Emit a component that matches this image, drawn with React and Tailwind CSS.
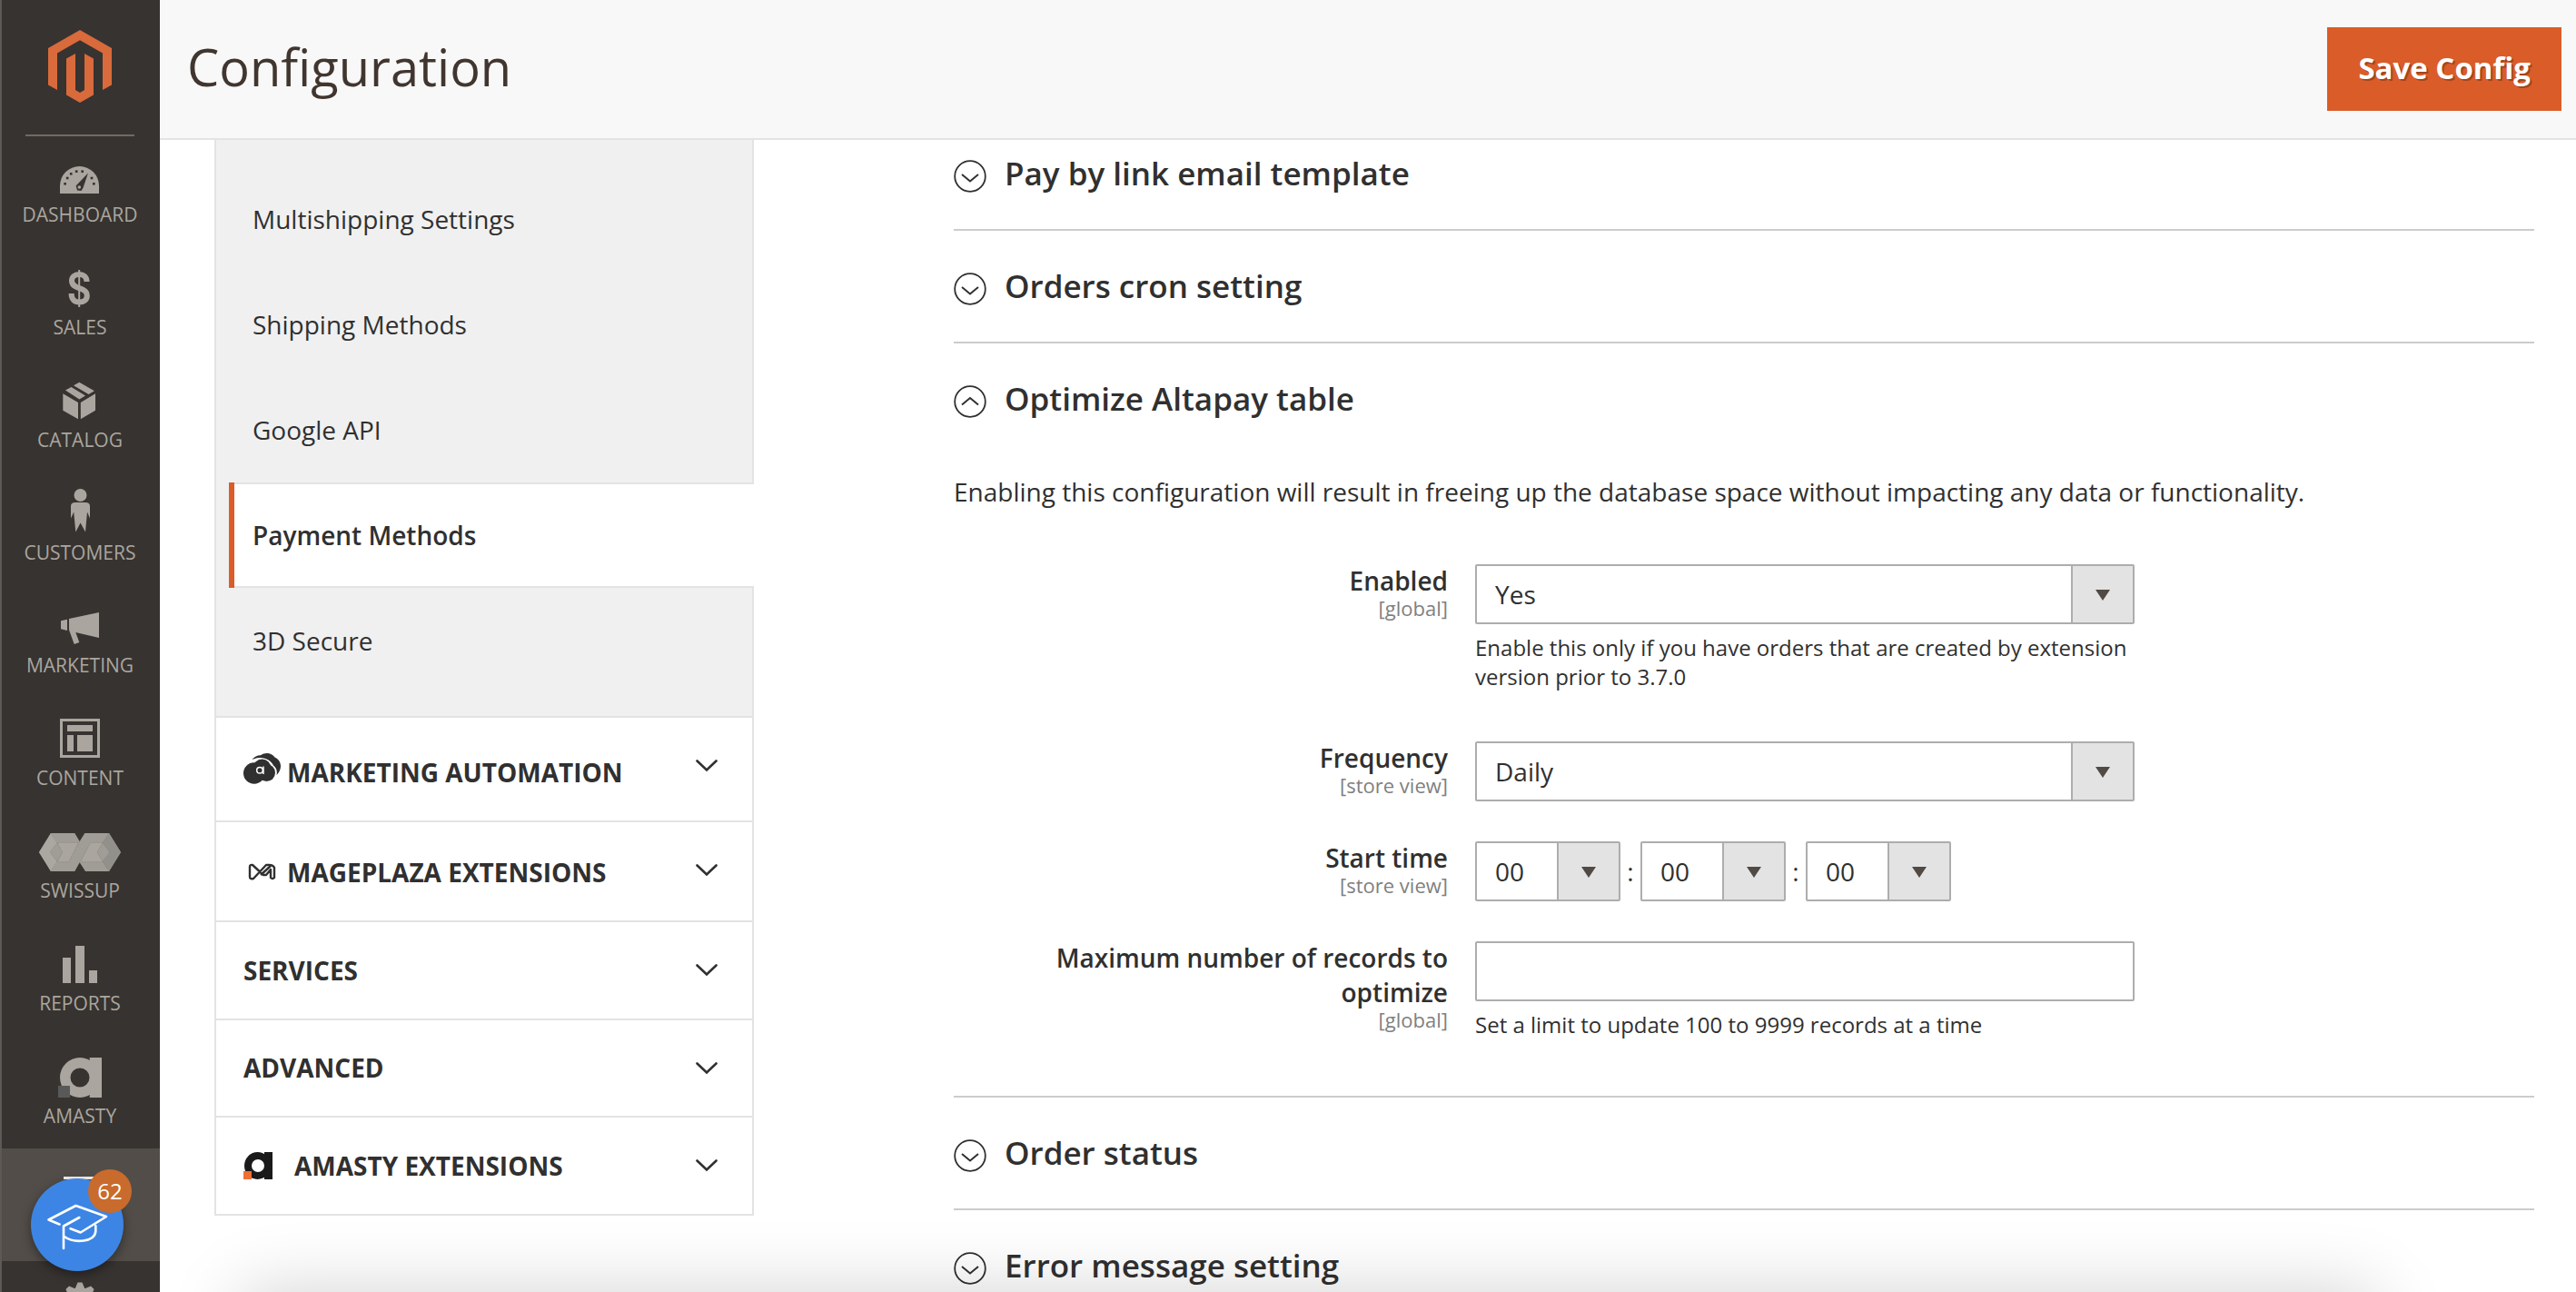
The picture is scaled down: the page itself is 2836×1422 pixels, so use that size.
import React from "react";

const NAV_BG = "#373330";

const DashboardIcon = () => (
  <>
    <path d="M28 49V40.5A21.5 21.5 0 0 1 71 40.5V49Z" />
    <g fill={NAV_BG}>
      {[[33.6, 38.3], [36.2, 32], [40.2, 27.3], [46.2, 24.7], [52.7, 24.7], [63, 32], [65.3, 38.3]].map(([x, y]) => (
        <rect key={x} x={x - 1.3} y={y - 1.3} width="2.6" height="2.6" />
      ))}
      <path d="M59 26.5L45.6 40.5 47 45.5 51.5 46 53.6 42.5Z" />
    </g>
    <circle cx="49.3" cy="42" r="1.8" />
  </>
);

const SalesIcon = () => (
  <>
    <path
      d="M57.5 22C57.5 16.5 54 14 49.2 14C44 14 41 16.8 41 21C41 26 45 27.6 49.2 29.2C54.5 31 57.8 32.8 57.8 37.6C57.8 42 54.5 44.6 49.2 44.6C44 44.6 40.6 41.5 40.6 35"
      fill="none"
      stroke="currentColor"
      strokeWidth="6"
    />
    <rect x="48.2" y="9" width="2" height="41" />
  </>
);

const CatalogIcon = () => (
  <>
    <path d="M31.3 21.3L48 31V49.3L31.3 39.7Z" />
    <path d="M50.8 31L67 21.3V39.7L50.8 49.3Z" />
    <path d="M40.5 14L34 17.5 49.3 27.5 56 23.5Z" />
    <path d="M49.3 8.7L43 12.2 59.6 21.9 65.9 18.3Z" />
  </>
);

const CustomersIcon = () => (
  <>
    <circle cx="50.5" cy="9" r="7" />
    <path d="M44 17H57Q61 17.5 61 21V34.5L58 27.5 56 49.5 50.6 39.5 45.3 49.5 43.2 27.5 40 34.5V21Q40 17.5 44 17Z" />
  </>
);

const MarketingIcon = () => (
  <>
    <path d="M29 23.3L36 21.7V34L29 32.3Z" />
    <path d="M38 21L71 14V42L45.3 36 49.3 47 43.7 49 38 33.3Z" />
  </>
);

const ContentIcon = () => (
  <>
    <rect x="29.5" y="8.5" width="41" height="40" fill="none" stroke="currentColor" strokeWidth="3" />
    <rect x="36" y="14" width="28" height="7" />
    <rect x="36" y="25" width="7" height="18" />
    <rect x="47" y="25" width="17" height="18" />
  </>
);

const SwissupIcon = () => (
  <>
    <path d="M5 30L18 9H44.3L49.7 18 55.3 9H82L95 30 82 51H56L49.7 41.3 44.3 51H18Z" fill="#a09c96" />
    <path d="M5 30L18 9 25.3 19.3 17.3 30 25.3 40.7 18 51Z" fill="#aba7a1" />
    <path d="M95 30L82 9 74.7 19.3 82.7 30 74.7 40.7 82 51Z" fill="#92908a" />
    <path d="M25.3 19.3H48L37.5 40.7H25.3L31 30Z" fill="#aaa69f" />
    <path d="M74.7 19.3H61.7L51 40.7H74.7L69 30Z" fill="#aaa69f" />
    <path
      d="M18 9L31 30 18 51M82 9L69 30 82 51M25.3 19.3L17.3 30 25.3 40.7M74.7 19.3L82.7 30 74.7 40.7M25.3 19.3H48M52 40.7H74.7M25.3 40.7H37.5L49.7 18M49.7 41.3L61.7 19.3H74.7"
      fill="none"
      stroke="#8a8781"
      strokeWidth="0.7"
      strokeDasharray="2 1"
    />
  </>
);

const ReportsIcon = () => (
  <>
    <rect x="31" y="22" width="9" height="28" />
    <rect x="45" y="9" width="10" height="41" />
    <rect x="60" y="36" width="9" height="14" />
  </>
);

const AmastyIcon = () => (
  <>
    <path
      fillRule="evenodd"
      d="M50 8A22 22 0 1 0 50 52A22 22 0 1 0 50 8ZM50 19.5A10.5 10.5 0 1 1 50 40.5A10.5 10.5 0 1 1 50 19.5Z"
    />
    <path d="M60.7 8H74V52H60.7V44L64 30 60.7 16Z" />
    <rect x="26" y="39" width="13" height="13" fill="#595959" />
  </>
);

const StoresIcon = () => (
  <>
    <rect x="32" y="15" width="36" height="3" />
    <path d="M34 20H66L71 30H29Z" />
    <rect x="34" y="32" width="32" height="18" />
  </>
);

const SystemIcon = () => (
  <>
    {[0, 45, 90, 135, 180, 225, 270, 315].map((a) => (
      <path key={a} d="M47.500 7.500H52.500L56 16H44Z" transform={`rotate(${a} 50 27)`} />
    ))}
    <circle cx="50" cy="27" r="14" />
  </>
);

const menu = [
  ["Dashboard", DashboardIcon],
  ["Sales", SalesIcon],
  ["Catalog", CatalogIcon],
  ["Customers", CustomersIcon],
  ["Marketing", MarketingIcon],
  ["Content", ContentIcon],
  ["Swissup", SwissupIcon],
  ["Reports", ReportsIcon],
  ["Amasty", AmastyIcon],
];

function MenuIcon({ children }) {
  return (
    <svg viewBox="0 0 100 60" className="h-[60px] w-[100px] shrink-0" fill="currentColor" aria-hidden="true">
      {children}
    </svg>
  );
}

function AdminMenu() {
  return (
    <nav aria-label="Admin" className="relative w-44 shrink-0 overflow-hidden border-l-2 border-[#5c5956] bg-[#373330]">
      <a href="#home" aria-label="Magento" className="flex justify-center pt-8">
        <svg viewBox="0 0 70 82" className="mr-0.5 h-[82px] w-[70px]" fill="#d96a3b">
          <path d="M35 1L70 21V61.500L60 67V26.500L35 12.300 10 26.500V67L0 61.500V21Z" />
          <path d="M20 32.500L30 27V67L35 70 40 67V27L50 32.500V72.500L35 81 20 72.500Z" />
        </svg>
      </a>
      <hr className="mt-[34px] mr-7 ml-[26px] border-t-2 border-[#736963]" />
      <ul className="-mt-0.5">
        {menu.map(([label, Icon]) => (
          <li key={label}>
            <a
              href={"#" + label.toLowerCase()}
              className="flex h-[124px] flex-col items-center pt-4 pr-0.5 text-[#aaa69f]"
            >
              <MenuIcon>
                <Icon />
              </MenuIcon>
              <span className="text-[21px] leading-6 uppercase">{label}</span>
            </a>
          </li>
        ))}
        <li>
          <a
            href="#stores"
            aria-label="Stores"
            className="-ml-0.5 flex h-[124px] flex-col items-center border-l-2 border-[#6e6a66] bg-[#524d48] pt-4 pr-0.5 text-[#f7f3eb]"
          >
            <MenuIcon>
              <StoresIcon />
            </MenuIcon>
          </a>
        </li>
        <li>
          <a
            href="#system"
            aria-label="System"
            className="flex h-[124px] flex-col items-center pt-4 pr-0.5 text-[#aaa69f]"
          >
            <MenuIcon>
              <SystemIcon />
            </MenuIcon>
          </a>
        </li>
      </ul>
      <button
        aria-label="Guides, 62 new"
        className="absolute top-[1297px] left-8 h-[102px] w-[102px] rounded-full bg-[#3d85e5] shadow-[0_4px_12px_rgba(0,0,0,0.4)]"
      >
        <svg
          viewBox="0 0 102 102"
          className="h-full w-full"
          fill="none"
          stroke="#fff"
          strokeWidth="2.6"
          strokeLinecap="round"
          strokeLinejoin="round"
        >
          <path d="M31.500 50.500L19.500 45.500 49.500 30 83 42 54.700 59.500 43.500 55.300" />
          <path d="M53.300 43L36 52.500V77" />
          <path d="M36.700 64C48 72 71 70 71.300 58V52" />
        </svg>
        <span className="absolute -top-2.5 left-[63px] flex h-12 w-12 items-center justify-center rounded-full bg-[#c96b2d] text-[24px] leading-6 text-white">
          62
        </span>
      </button>
    </nav>
  );
}

const AutomationIcon = () => (
  <svg viewBox="0 0 42 44" className="h-11 w-[42px]" fill="#303030" aria-hidden="true">
    <path d="M9.500 8C12 4.500 16 3 19 3.200C24-.5 31 .2 34.500 5.500C42 9 43.500 18 36.500 25C37.500 20 36 17 33 14.500C30 7.500 20 3 9.500 8Z" />
    <circle cx="11.800" cy="23" r="11.800" />
    <circle cx="20.500" cy="17.500" r="10" />
    <circle cx="25.500" cy="22.500" r="9.500" />
    <circle cx="18" cy="19.800" r="3.300" fill="none" stroke="#fff" strokeWidth="1.500" />
    <path d="M22 15.500V24" stroke="#fff" strokeWidth="1.500" />
  </svg>
);

const MageplazaIcon = () => (
  <svg
    viewBox="0 0 42 36"
    className="h-9 w-[42px]"
    fill="none"
    stroke="#303030"
    strokeWidth="2.4"
    strokeLinejoin="round"
    aria-hidden="true"
  >
    <path d="M7 12Q7 9.500 10 10L22 21H25L30 15V24Q32 26 34 24V13Q33 10 28 10H25L11 25Q7 26 7 23Z" />
    <path d="M19 21L30 11" />
  </svg>
);

const AmastyBadge = () => (
  <svg viewBox="0 0 50 30" className="h-[30px] w-[50px]" fill="#1a1a1a" aria-hidden="true">
    <path
      fillRule="evenodd"
      d="M15.500 0A14.500 15 0 1 0 15.500 30A14.500 15 0 1 0 15.500 0ZM16 8A7 7 0 1 1 16 22A7 7 0 1 1 16 8Z"
    />
    <path d="M23 0H32V30H23V24L25 15 23 6Z" />
    <rect y="21" width="9" height="9" fill="#ee7034" />
  </svg>
);

const tabs = [
  ["Marketing Automation", AutomationIcon, "pt-[41px]"],
  ["Mageplaza Extensions", MageplazaIcon, "pt-9"],
  ["Services", null, "pt-[34px]"],
  ["Advanced", null, "pt-[33px]"],
  ["Amasty Extensions", AmastyBadge, "pt-[34px]"],
];

const pages = ["Multishipping Settings", "Shipping Methods", "Google API", "Payment Methods", "3D Secure"];

function ConfigNav() {
  return (
    <div className="ml-[60px] w-[594px] shrink-0 self-start">
      <ul className="border-x-2 border-[#e3e3e3] bg-[#f0f0f0] pt-[29px] pb-[25px] pl-3.5">
        {pages.map((page) => (
          <li key={page} className={page === "Payment Methods" ? "-mr-0.5" : ""}>
            <a
              href="#page"
              className={
                page === "Payment Methods"
                  ? "flex h-[116px] items-center border-y-2 border-[#e3e3e3] bg-white font-semibold"
                  : "flex h-[116px] items-center border-l-6 border-transparent pl-5"
              }
            >
              {page === "Payment Methods" && <span className="-my-0.5 mr-5 w-1.5 self-stretch bg-[#da5c28]" />}
              {page}
            </a>
          </li>
        ))}
      </ul>
      <div className="border-x-2 border-b-2 border-[#e3e3e3] bg-white">
        {tabs.map(([label, Icon, pad]) => (
          <button
            key={label}
            className="flex w-full items-start justify-between border-t-2 border-[#e3e3e3] pr-[38px] pl-[30px] text-left"
          >
            <span className={`flex items-center gap-1.5 pb-[34px] ${pad}`}>
              {Icon && (
                <span className="-my-2">
                  <Icon />
                </span>
              )}
              <span className="leading-[38px] font-bold uppercase">{label}</span>
            </span>
            <svg
              viewBox="0 0 24 14"
              className="mt-[46px] h-3.5 w-6"
              fill="none"
              stroke="#303030"
              strokeWidth="2.6"
              strokeLinecap="round"
              aria-hidden="true"
            >
              <path d="M1.500 1.500L12 11.500 22.500 1.500" />
            </svg>
          </button>
        ))}
      </div>
    </div>
  );
}

function Section({ title, open, children }) {
  return (
    <section className="border-b-2 border-[#cccccc]">
      <h2>
        <button aria-expanded={!!open} className="flex w-full items-start gap-5 pt-[37px] pb-[37px] text-left">
          <svg viewBox="0 0 36 36" className="mt-[9px] h-9 w-9" fill="none" stroke="#303030" strokeWidth="2" aria-hidden="true">
            <circle cx="18" cy="18" r="16.800" strokeWidth="1.800" />
            <path d={open ? "M9 21.500L18 14 27 21.500" : "M9 16L18 23.500 27 16"} />
          </svg>
          <span className="text-[35px] leading-[48px] font-semibold">{title}</span>
        </button>
      </h2>
      {children}
    </section>
  );
}

function Select({ id, label, options, className }) {
  return (
    <div className={`relative ${className}`}>
      <select
        id={id}
        aria-label={label}
        className="h-[66px] w-full appearance-none rounded-xs border-2 border-[#adadad] bg-white pl-5 text-[28px]"
      >
        {options.map((o) => (
          <option key={o}>{o}</option>
        ))}
      </select>
      <span className="pointer-events-none absolute inset-y-0.5 right-0.5 flex w-[68px] items-center justify-center border-l-2 border-[#adadad] bg-[#e3e3e3]">
        <svg viewBox="0 0 16 12" className="mt-0.5 h-3 w-4" fill="#514943">
          <path d="M0 0H16L8 12Z" />
        </svg>
      </span>
    </div>
  );
}

function Field({ id, label, scope, note, children }) {
  return (
    <div className="grid grid-cols-[544fr_726fr_470fr]">
      <div className="flex flex-col items-end pt-px pl-8 text-right">
        <label htmlFor={id} className="leading-[38px] font-semibold">
          {label}
        </label>
        <span className="text-[22px] leading-[22px] text-[#808080]">[{scope}]</span>
      </div>
      <div className="-mr-[30px] ml-[30px] pt-0.5">
        {children}
        {note && <p className="mt-2.5 text-[24px] leading-8">{note}</p>}
      </div>
    </div>
  );
}

function Settings() {
  return (
    <main className="-mt-6 mr-[46px] ml-[220px] min-w-0 flex-1">
      <Section title="Pay by link email template" />
      <Section title="Orders cron setting" />
      <Section title="Optimize Altapay table" open>
        <p className="mt-[22px] leading-[38px]">
          Enabling this configuration will result in freeing up the database space without impacting any data or
          functionality.
        </p>
        <form className="mt-[59px] flex flex-col gap-[42px] pb-[62px]">
          <div className="pb-[11px]">
            <Field
              id="enabled"
              label="Enabled"
              scope="global"
              note="Enable this only if you have orders that are created by extension version prior to 3.7.0"
            >
              <Select id="enabled" label="Enabled" options={["Yes", "No"]} className="w-full" />
            </Field>
          </div>
          <Field id="frequency" label="Frequency" scope="store view">
            <Select id="frequency" label="Frequency" options={["Daily", "Weekly", "Monthly"]} className="w-full" />
          </Field>
          <Field id="hours" label="Start time" scope="store view">
            <div className="flex items-center">
              <Select id="hours" label="Start time hours" options={["00", "01"]} className="w-40" />
              <span className="w-[22px] text-center">:</span>
              <Select id="minutes" label="Start time minutes" options={["00", "01"]} className="w-40" />
              <span className="w-[22px] text-center">:</span>
              <Select id="seconds" label="Start time seconds" options={["00", "01"]} className="w-40" />
            </div>
          </Field>
          <Field
            id="limit"
            label="Maximum number of records to optimize"
            scope="global"
            note="Set a limit to update 100 to 9999 records at a time"
          >
            <input id="limit" type="text" className="h-[66px] w-full rounded-xs border-2 border-[#adadad] bg-white px-5" />
          </Field>
        </form>
      </Section>
      <Section title="Order status" />
      <Section title="Error message setting" />
    </main>
  );
}

export default function App() {
  return (
    <div className="relative flex h-screen overflow-hidden bg-white font-['Open_Sans',sans-serif] text-[28px] text-[#303030]">
      <AdminMenu />
      <div className="flex min-w-0 flex-1 flex-col">
        <header className="flex shrink-0 items-start justify-between border-b-2 border-[#e3e3e3] bg-[#f8f8f8] py-[30px] pr-4 pl-[30px]">
          <h1 className="text-[56px] leading-[86px] text-[#41362f]">Configuration</h1>
          <button className="bg-[#da5c28] px-[34px] pt-[22px] pb-6 text-[33px] leading-[46px] font-bold text-white [text-shadow:2px_2px_0_rgba(0,0,0,0.25)]">
            Save Config
          </button>
        </header>
        <div className="flex min-h-0 flex-1 overflow-hidden">
          <ConfigNav />
          <Settings />
        </div>
      </div>
      <div className="pointer-events-none absolute top-full right-[221px] left-[265px] h-24 shadow-[0_0_80px_rgba(0,0,0,0.18)]" />
    </div>
  );
}
